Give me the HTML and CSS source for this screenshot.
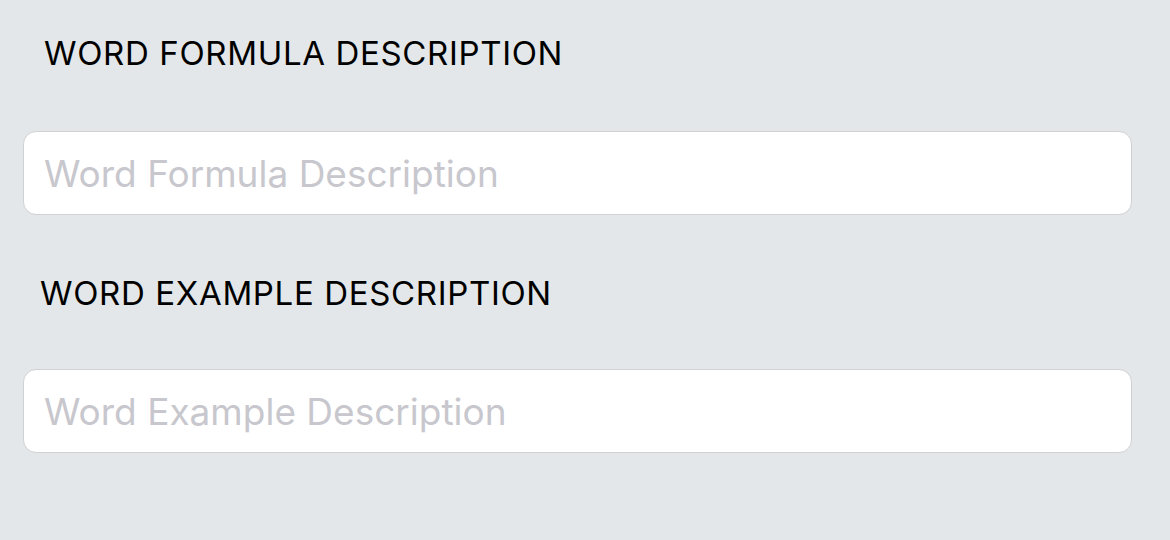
FILE: index.html
```html
<!DOCTYPE html>
<html>
<head>
<meta charset="utf-8">
<link rel="stylesheet" href="styles.css">
</head>
<body>
<main class="form">
  <section class="field">
    <h2 class="label label-first">WORD FORMULA DESCRIPTION</h2>
    <input class="input" type="text" placeholder="Word Formula Description">
  </section>
  <section class="field">
    <h2 class="label label-second">WORD EXAMPLE DESCRIPTION</h2>
    <input class="input" type="text" placeholder="Word Example Description">
  </section>
</main>
</body>
</html>
```

FILE: styles.css
```css
html, body {
  margin: 0;
  padding: 0;
  background: #e4e7e9;
  font-family: Inter, "Noto Sans", "Liberation Sans", sans-serif;
}
.form {
  display: flex;
  flex-direction: column;
  padding: 33px 38px 0 23px;
}
.field {
  display: flex;
  flex-direction: column;
}
.field + .field {
  margin-top: 58px;
}
.label {
  margin: 0;
  font-size: 33px;
  line-height: 40px;
  font-weight: 400;
  color: #000;
  letter-spacing: 0.65px;
  height: 40px;
}
.label-first {
  padding-left: 21px;
  margin-bottom: 58px;
}
.label-second {
  padding-left: 17px;
  margin-bottom: 56px;
}
.input {
  box-sizing: border-box;
  height: 84px;
  width: 100%;
  margin: 0;
  border: 1px solid #cfd1d3;
  border-radius: 13px;
  background: #fff;
  padding: 0 20px;
  font-family: Inter, "Noto Sans", "Liberation Sans", sans-serif;
  font-size: 37px;
  color: #000;
  outline: none;
}
.input::placeholder {
  color: #c7c7cd;
  opacity: 1;
}
```
